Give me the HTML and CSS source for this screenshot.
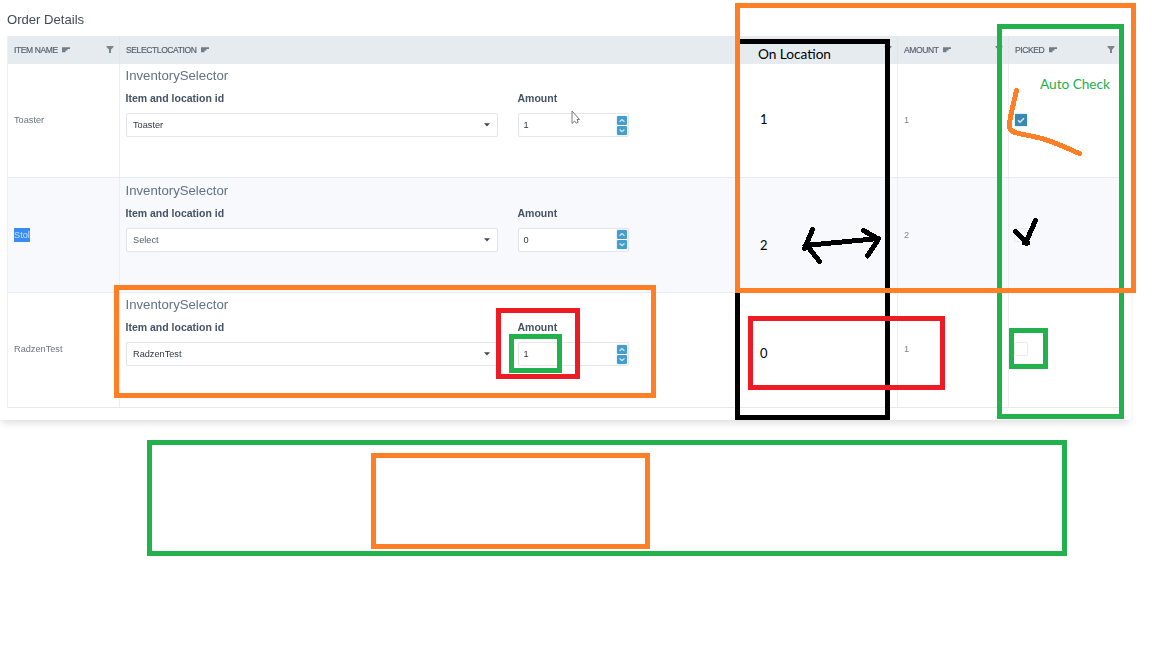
FILE: index.html
```html
<!DOCTYPE html>
<html lang="en">
<head>
<meta charset="utf-8">
<title>Order Details</title>
<link rel="stylesheet" href="styles.css">
</head>
<body>
<svg class="symbols" aria-hidden="true">
  <symbol id="sort" viewBox="0 0 8 6"><path d="M0 .3h8v1.800H0zM0 2.100h5.500v1.500H0zM0 3.600h3.500v1.700H0z"/></symbol>
  <symbol id="filter" viewBox="0 0 8 7"><path d="M.5 0h7v1L5 3.800V7H3V3.800L.5 1z"/></symbol>
  <symbol id="caret" viewBox="0 0 6 4"><path d="M0 .3h6L3 3.600z"/></symbol>
  <symbol id="up" viewBox="0 0 10 9"><path d="M2.500 5.800 5 3.700l2.500 2.100" fill="none" stroke="#c2e6f6" stroke-width="1.300"/></symbol>
  <symbol id="down" viewBox="0 0 10 9"><path d="M2.500 3.500 5 5.600l2.500-2.100" fill="none" stroke="#c2e6f6" stroke-width="1.300"/></symbol>
</svg>
<main class="card">
  <h1 class="title">Order Details</h1>
  <div class="grid">
    <div class="row head">
      <div class="cell"><span class="heading">ITEM NAME</span><svg class="sort"><use href="#sort"/></svg><svg class="filter"><use href="#filter"/></svg></div>
      <div class="cell wide"><span class="heading">SELECTLOCATION</span><svg class="sort"><use href="#sort"/></svg><svg class="filter"><use href="#filter"/></svg></div>
      <div class="cell"><span class="heading">AMOUNT</span><svg class="sort"><use href="#sort"/></svg><svg class="filter"><use href="#filter"/></svg></div>
      <div class="cell"><span class="heading">PICKED</span><svg class="sort"><use href="#sort"/></svg><svg class="filter"><use href="#filter"/></svg></div>
    </div>
    <div class="row">
      <div class="cell">Toaster</div>
      <div class="cell wide">
        <h2 class="selector-title">InventorySelector</h2>
        <div class="fields">
          <div class="field"><div class="label">Item and location id</div><div class="input select"><span>Toaster</span><svg class="caret"><use href="#caret"/></svg></div></div>
          <div class="field"><div class="label">Amount</div><div class="input number"><span>1</span><div class="spin"><svg><use href="#up"/></svg><svg><use href="#down"/></svg></div></div></div>
        </div>
      </div>
      <div class="cell qty">1</div>
      <div class="cell"><div class="check on"><svg viewBox="0 0 12 12"><path d="M3 6.200 5 8.200 9 4.200" fill="none" stroke="#d7f0fb" stroke-width="1.400"/></svg></div></div>
    </div>
    <div class="row alt">
      <div class="cell"><span class="selected">Stol</span></div>
      <div class="cell wide">
        <h2 class="selector-title">InventorySelector</h2>
        <div class="fields">
          <div class="field"><div class="label">Item and location id</div><div class="input select muted"><span>Select</span><svg class="caret"><use href="#caret"/></svg></div></div>
          <div class="field"><div class="label">Amount</div><div class="input number"><span>0</span><div class="spin"><svg><use href="#up"/></svg><svg><use href="#down"/></svg></div></div></div>
        </div>
      </div>
      <div class="cell qty">2</div>
      <div class="cell"><div class="check"></div></div>
    </div>
    <div class="row">
      <div class="cell">RadzenTest</div>
      <div class="cell wide">
        <h2 class="selector-title">InventorySelector</h2>
        <div class="fields">
          <div class="field"><div class="label">Item and location id</div><div class="input select"><span>RadzenTest</span><svg class="caret"><use href="#caret"/></svg></div></div>
          <div class="field"><div class="label">Amount</div><div class="input number"><span>1</span><div class="spin"><svg><use href="#up"/></svg><svg><use href="#down"/></svg></div></div></div>
        </div>
      </div>
      <div class="cell qty">1</div>
      <div class="cell"><div class="check"></div></div>
    </div>
  </div>
</main>
<svg class="markup" width="1152" height="648" viewBox="0 0 1152 648">
  <g class="box">
    <rect class="black" x="737.5" y="41.5" width="150" height="376"/>
    <rect class="green" x="999.5" y="26.5" width="122" height="390"/>
    <rect class="orange" x="737.5" y="5.5" width="396" height="285"/>
    <rect class="red" x="750.5" y="318.5" width="192" height="69"/>
    <rect class="green" x="1011.5" y="330.5" width="34" height="36"/>
    <rect class="orange" x="116.5" y="287.5" width="537" height="108"/>
    <rect class="red" x="498.5" y="310.5" width="79" height="66"/>
    <rect class="green" x="511.5" y="336.5" width="48" height="34"/>
    <rect class="green" x="149.5" y="442.5" width="915" height="111"/>
    <rect class="orange" x="373.5" y="455.5" width="274" height="91"/>
  </g>
  <g class="stroke">
    <path class="orange" d="M1016.500 90.500C1013 106 1009 120 1009.500 126.500C1010 134 1020 133 1042 138.500C1055 142 1066 148 1079.500 153.500"/>
    <path class="black" d="M805 245.500 878.500 238.500M812.500 229.500 804.500 248.500 807 245.500 819.500 261.500M863.500 230.500 878.500 239 867.500 256"/>
    <path class="black" d="M1015.500 231.500 1026 242 1035.500 220.500M1024.500 243h3"/>
  </g>
  <path class="pointer" d="M572 111V123.500L574.600 121 576.300 123.200 578.300 122.200 577 119.500H579.500Z"/>
  <g class="note">
    <text x="758" y="59" textLength="73">On Location</text>
    <text x="760" y="124" textLength="7.500" lengthAdjust="spacingAndGlyphs">1</text>
    <text x="760" y="250" textLength="7.500" lengthAdjust="spacingAndGlyphs">2</text>
    <text x="760" y="358" textLength="7.500" lengthAdjust="spacingAndGlyphs">0</text>
    <text class="auto" x="1040" y="89" textLength="70">Auto Check</text>
  </g>
</svg>
</body>
</html>
```
FILE: styles.css
```css
* { box-sizing: border-box; }
body { margin: 0; width: 1152px; height: 648px; overflow: hidden; background: #fff; font-family: "Liberation Sans", Arial, sans-serif; font-size: 9.2px; color: #6a757f; }
.symbols { display: none; }
.card { width: 1131px; height: 420px; padding: 11px 7px 0; box-shadow: 0 5px 7px -2px #dededf; background: #fff; filter: blur(.3px); }
.title { margin: 0; height: 25px; font-size: 13.1px; line-height: 17px; font-weight: 400; color: #414a55; }
.grid { width: 1113px; border-left: 1px solid #edf0f4; border-bottom: 1px solid #e5e8ec; }
.row { display: grid; grid-template-columns: 112px 778px 111px 111px; height: 114.700px; }
.row + .row { border-top: 1px solid #e8ebef; }
.alt { background: #f7f9fd; }
.cell { display: flex; align-items: center; padding: 0 6px 1px; border-right: 1px solid #eceef2; }
.cell:last-child { border-right: 0; }
.head { height: 26.500px; background: #e6ebef; color: #545d66; font-size: 8.5px; }
.head .cell { border-color: #e0e5ea; padding-top: 1px; padding-bottom: 0; }
.heading { letter-spacing: -.38px; -webkit-text-stroke: .15px currentColor; }
.sort { width: 8px; height: 6px; margin-left: 4.5px; fill: #737d85; }
.filter { width: 8px; height: 7px; margin-left: auto; margin-right: -1px; fill: #7b858c; }
.row:not(.head) .wide { display: block; padding: 4.500px 5.500px 0; }
.selector-title { margin: 0; font-size: 13.2px; line-height: 16px; height: 22px; font-weight: 400; color: #627284; }
.fields { display: flex; gap: 20px; }
.label { height: 23px; line-height: 16px; font-size: 10.500px; font-weight: 700; color: #455364; }
.input { display: flex; align-items: center; height: 24px; border: 1px solid #e2e5e9; border-radius: 2px; background: #fff; color: #30373f; padding: 0 7px 0 6.500px; box-shadow: 0 0 1px #edf0f3; }
.select { width: 372px; }
.muted { color: #555d65; }
.number { width: 111px; padding: 0 1px 0 5px; }
.caret { width: 6px; height: 4px; margin-left: auto; fill: #41494f; }
.spin { display: flex; flex-direction: column; gap: 1px; margin-left: auto; box-shadow: 0 0 2px #a8dcf3; }
.spin svg { width: 10px; height: 9px; border-radius: 1px; background: #479cc8; }
.qty { color: #85868a; }
.selected { display: block; height: 14px; line-height: 14px; background: #388cf4; color: #c5e2ff; }
.check { width: 14px; height: 14px; margin-left: -1px; border: 1px solid #e9ebef; border-radius: 2px; }
.check.on { width: 12px; height: 12px; margin: 1px 0 0; border: 0; border-radius: 0; background: #3b88b3; box-shadow: 0 0 2px #9ed5ec; }
.check svg { display: block; width: 12px; height: 12px; }
.markup { position: absolute; left: 0; top: 0; pointer-events: none; }
.box, .stroke { fill: none; stroke-width: 5; }
.stroke { stroke-linecap: round; stroke-linejoin: round; shape-rendering: crispEdges; }
.black { stroke: #000; }
.green { stroke: #22b14c; }
.orange { stroke: #ff7f27; }
.red { stroke: #ed1c24; }
.pointer { fill: #fff; stroke: #777a7e; stroke-width: 1; }
.note { font: 13.700px Lato, sans-serif; fill: #000; }
.note .auto { fill: #22b14c; }
```
